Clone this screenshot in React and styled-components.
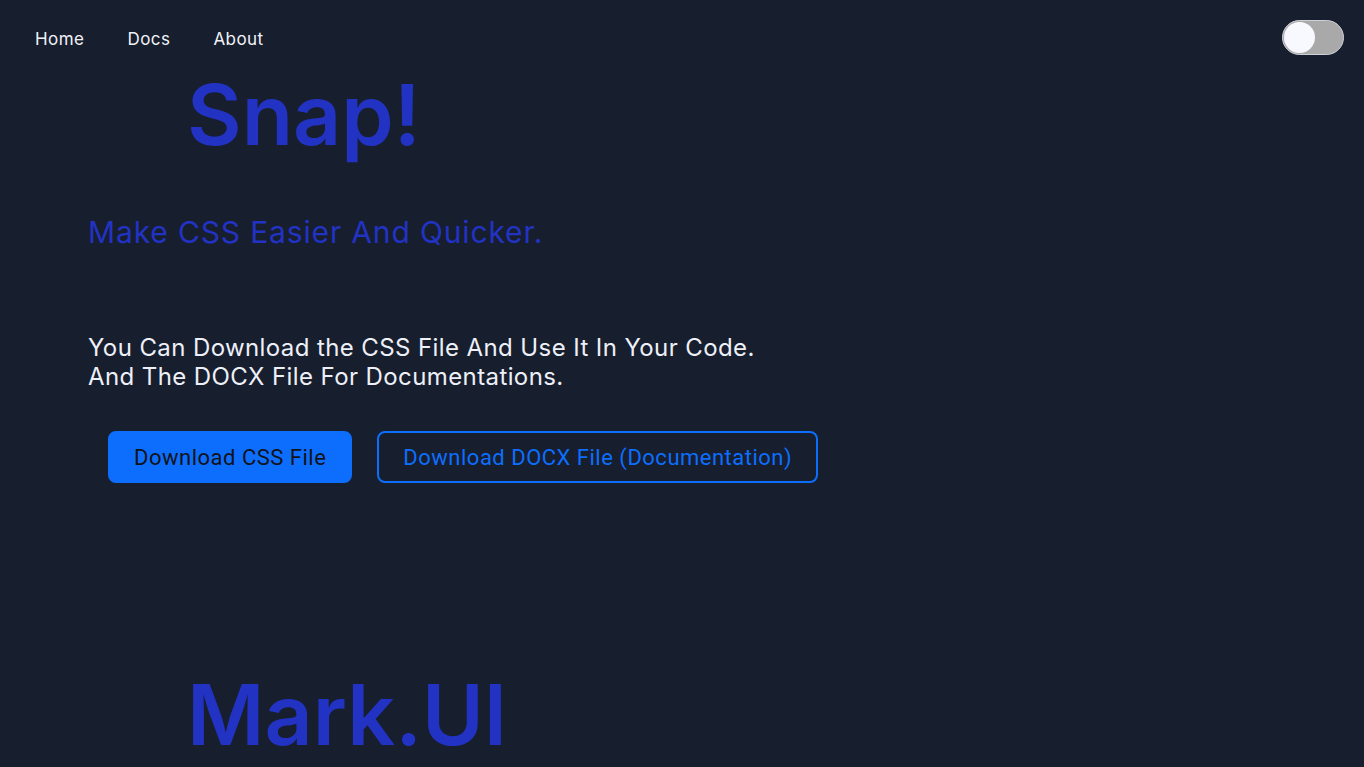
import React from 'react';
import styled, { createGlobalStyle } from 'styled-components';

const GlobalStyle = createGlobalStyle`
  html, body {
    margin: 0;
    padding: 0;
    background: #171e2e;
  }
  body {
    font-family: Inter, "Open Sans", sans-serif;
    color: #eef0f8;
  }
  * { box-sizing: border-box; }
`;

const Page = styled.div`
  min-height: 767px;
  background: #171e2e;
  overflow: hidden;
`;

const NavBar = styled.nav`
  display: flex;
  align-items: center;
  justify-content: space-between;
  height: 76px;
  padding: 0 20px 2px 13px;
`;

const NavLinks = styled.ul`
  display: flex;
  list-style: none;
  margin: 3px 0 0;
  padding: 0;
`;

const NavLink = styled.a`
  display: block;
  padding: 0 21px 0 22px;
  font-size: 17px;
  color: #f1f2f8;
  text-decoration: none;
  letter-spacing: 0.45px;
`;

const Toggle = styled.label`
  position: relative;
  display: block;
  width: 62px;
  height: 35px;
  border-radius: 18px;
  background: #a9a9a9;
  border: 1px solid #d0d0d8;
  cursor: pointer;
`;

const Knob = styled.span`
  position: absolute;
  top: 1px;
  left: ${p => (p.on ? '28px' : '1px')};
  width: 31px;
  height: 31px;
  border-radius: 50%;
  background: #f8f9ff;
`;

const Hero = styled.section`
  padding: 0 0 0 88px;
  margin-bottom: ${p => p.gap || 0}px;
`;

const Brand = styled.h1`
  margin: -3px 0 0 99px;
  font-size: 84px;
  font-weight: 600;
  line-height: 1;
  letter-spacing: 0;
  color: #2233c4;
`;

const Tagline = styled.h2`
  margin: 57px 0 0;
  font-size: 30px;
  font-weight: 400;
  color: #2233c4;
  letter-spacing: 0.85px;
`;

const Blurb = styled.p`
  margin: 83px 0 0;
  font-size: 24px;
  line-height: 29px;
  font-weight: 400;
  color: #eef0f8;
  letter-spacing: 0.4px;
`;

const Actions = styled.div`
  display: flex;
  gap: 25px;
  margin: 40px 0 0 20px;
`;

const Button = styled.button`
  height: 52px;
  padding: 0 24px;
  border-radius: 8px;
  font-family: Roboto, "Liberation Sans", sans-serif;
  font-size: 22px;
  letter-spacing: 0.5px;
  cursor: pointer;
  border: 2px solid #0d6efd;
  background: ${p => (p.outline ? 'transparent' : '#0d6efd')};
  color: ${p => (p.outline ? '#0d6efd' : '#111318')};
`;

export default function App() {
  return (
    <Page>
      <GlobalStyle />
      <NavBar>
        <NavLinks>
          <li><NavLink href="#">Home</NavLink></li>
          <li><NavLink href="#">Docs</NavLink></li>
          <li><NavLink href="#">About</NavLink></li>
        </NavLinks>
        <Toggle>
          <Knob />
        </Toggle>
      </NavBar>

      <Hero gap={193}>
        <Brand>Snap!</Brand>
        <Tagline>Make CSS Easier And Quicker.</Tagline>
        <Blurb>
          You Can Download the CSS File And Use It In Your Code.
          <br />
          And The DOCX File For Documentations.
        </Blurb>
        <Actions>
          <Button>Download CSS File</Button>
          <Button outline>Download DOCX File (Documentation)</Button>
        </Actions>
      </Hero>

      <Hero>
        <Brand>Mark.UI</Brand>
      </Hero>
    </Page>
  );
}
